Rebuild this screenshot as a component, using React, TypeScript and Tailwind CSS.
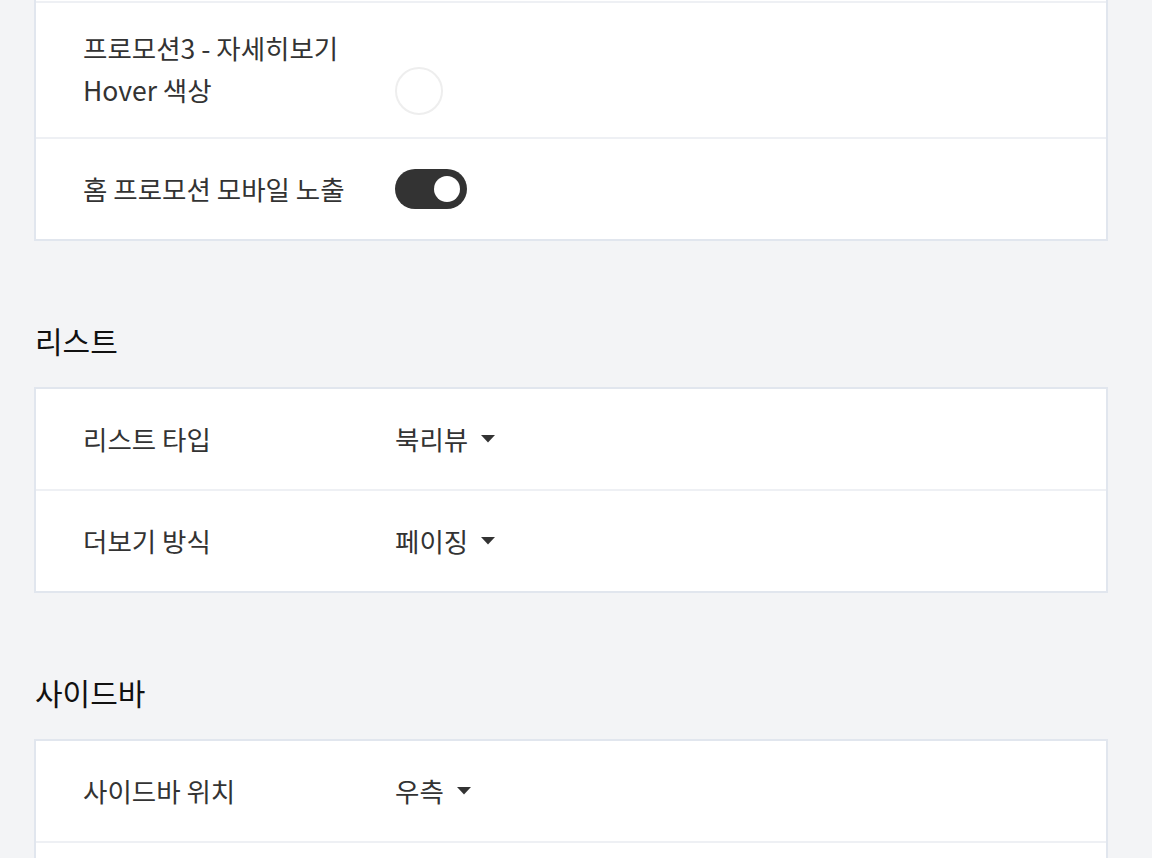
import React from "react";

const font = {
  fontFamily: '"Noto Sans CJK KR", "Noto Sans", sans-serif',
};

const Caret = () => (
  <svg width="14" height="8" viewBox="0 0 14 8" className="ml-[13px]">
    <path d="M0 0 L14 0 L7 7.5 Z" fill="#333333" />
  </svg>
);

const Toggle = ({ on }: { on: boolean }) => (
  <div
    className={`w-[72px] h-[40px] rounded-full flex items-center px-[7px] ${
      on ? "bg-[#333333] justify-end" : "bg-[#d1d5db] justify-start"
    }`}
  >
    <div className="w-[26px] h-[26px] rounded-full bg-white" />
  </div>
);

const Row = ({
  label,
  children,
  last,
}: {
  label?: React.ReactNode;
  children?: React.ReactNode;
  last?: boolean;
}) => (
  <div
    className={`flex items-center pl-[47px] ${
      last ? "h-[100px]" : "h-[102px] border-b-2 border-[#eef0f4]"
    }`}
  >
    <div className="w-[312px] text-[26.5px] leading-[42px] text-[#333333]">
      {label}
    </div>
    <div className="flex items-center text-[26.5px] text-[#333333]">
      {children}
    </div>
  </div>
);

const Select = ({ value }: { value: string }) => (
  <div className="flex items-center">
    <span>{value}</span>
    <Caret />
  </div>
);

const Heading = ({ children }: { children: React.ReactNode }) => (
  <h2 className="mt-[75px] mb-[23px] pl-[35px] text-[30px] leading-[48px] text-[#111111]">
    {children}
  </h2>
);

const Card = ({
  children,
  top = true,
}: {
  children: React.ReactNode;
  top?: boolean;
}) => (
  <div
    className={`ml-[34px] w-[1074px] bg-white border-2 border-[#e1e6ee] ${
      top ? "" : "border-t-0"
    }`}
  >
    {children}
  </div>
);

export default function App() {
  return (
    <div className="h-[858px] bg-[#f3f4f6] overflow-hidden" style={font}>
      <Card top={false}>
        <div className="h-[3px] border-b-2 border-[#eef0f4]" />
        <div className="flex items-start h-[136px] pl-[47px] pt-[24px] border-b-2 border-[#eef0f4]">
          <div className="w-[312px] text-[26.5px] leading-[42px] text-[#333333]">
            프로모션3 - 자세히보기
            <br />
            Hover 색상
          </div>
          <div className="mt-[40px] w-[48px] h-[48px] rounded-full border-2 border-[#eeeeee] bg-white" />
        </div>
        <Row label="홈 프로모션 모바일 노출" last>
          <Toggle on />
        </Row>
      </Card>

      <Heading>리스트</Heading>
      <Card>
        <Row label="리스트 타입">
          <Select value="북리뷰" />
        </Row>
        <Row label="더보기 방식" last>
          <Select value="페이징" />
        </Row>
      </Card>

      <Heading>사이드바</Heading>
      <Card>
        <Row label="사이드바 위치">
          <Select value="우측" />
        </Row>
        <Row last />
      </Card>
    </div>
  );
}
